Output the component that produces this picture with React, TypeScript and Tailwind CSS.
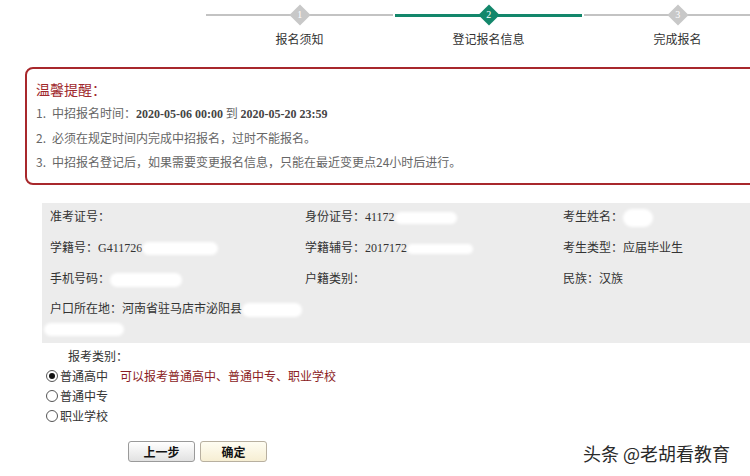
const cjk = "font-['Noto_Sans_CJK_SC',sans-serif]";
const serif = "font-['Liberation_Serif','Noto_Sans_CJK_SC',serif]";

const steps = [
  { n: 1, label: "报名须知", active: false },
  { n: 2, label: "登记报名信息", active: true },
  { n: 3, label: "完成报名", active: false },
];

const notes = [
  null,
  "必须在规定时间内完成中招报名，过时不能报名。",
  "中招报名登记后，如果需要变更报名信息，只能在最近变更点24小时后进行。",
];

function Blot({ className }: { className: string }) {
  return <span className={`inline-block rounded-full bg-white blur-[1.5px] align-middle ${className}`} />;
}

function Radio({ checked }: { checked?: boolean }) {
  return (
    <span className="mr-[2px] inline-flex h-[12px] w-[12px] items-center justify-center rounded-full border border-[#555] bg-white">
      {checked && <span className="h-[6px] w-[6px] rounded-full bg-[#111]" />}
    </span>
  );
}

export default function App() {
  return (
    <div className={`relative h-[476px] w-[750px] overflow-hidden bg-white text-[12px] text-[#333] ${cjk}`}>
      {/* steps */}
      <div className="flex pl-[205px] pt-[4px]">
        {steps.map((s) => (
          <div key={s.n} className="flex w-[189px] shrink-0 flex-col items-center">
            <div className="relative flex h-[22px] w-full items-center">
              <div className={`mx-[1px] w-full ${s.active ? "h-[3px] bg-[#13876b]" : "h-[2px] bg-[#c3c3c3]"}`} />
              <div
                className={`absolute left-1/2 top-1/2 flex h-[15px] w-[15px] -translate-x-1/2 -translate-y-1/2 rotate-45 items-center justify-center ${s.active ? "bg-[#13876b]" : "bg-[#c8c8c8]"}`}
              >
                <span className={`-rotate-45 text-[10px] leading-none text-white ${serif}`}>{s.n}</span>
              </div>
            </div>
            <div className="mt-[5px] leading-[16px] text-[#333]">{s.label}</div>
          </div>
        ))}
      </div>

      {/* notice */}
      <div className="ml-[25px] mt-[20px] w-[760px] rounded-[8px] border-2 border-[#a8282c] pb-[9px] pl-[9px] pt-[10px]">
        <div className="text-[14px] leading-[20px] text-[#a0282c]">温馨提醒：</div>
        <ol className="mt-[2px] text-[#666]">
          {notes.map((t, i) => (
            <li key={i} className="flex leading-[24px]">
              <span className="w-[16px] shrink-0">{i + 1}.</span>
              {t ?? (
                <span>
                  中招报名时间：<b className={`text-[#444] ${serif}`}>2020-05-06 00:00</b> 到{" "}
                  <b className={`text-[#444] ${serif}`}>2020-05-20 23:59</b>
                </span>
              )}
            </li>
          ))}
        </ol>
      </div>

      {/* info */}
      <div className="ml-[42px] mt-[18px] h-[140px] w-[720px] bg-[#ececec] pl-[8px]">
        <div className="grid grid-cols-[255px_258px_1fr] gap-y-[4px] leading-[26px]">
          <div>准考证号：</div>
          <div>
            身份证号：<span className={serif}>41172</span>
            <Blot className="h-[12px] w-[62px]" />
          </div>
          <div>
            考生姓名：<Blot className="h-[18px] w-[30px]" />
          </div>

          <div>
            学籍号：<span className={serif}>G411726</span>
            <Blot className="h-[13px] w-[76px]" />
          </div>
          <div>
            学籍辅号：<span className={serif}>2017172</span>
            <Blot className="h-[10px] w-[66px]" />
          </div>
          <div>考生类型：应届毕业生</div>

          <div>
            手机号码：<Blot className="h-[14px] w-[72px]" />
          </div>
          <div>户籍类别：</div>
          <div>民族：汉族</div>

          <div className="col-span-3">
            户口所在地：河南省驻马店市泌阳县
            <Blot className="h-[14px] w-[60px]" />
          </div>
        </div>
        <div className="-ml-[6px] mt-[2px] h-[13px] w-[80px] rounded-full bg-white blur-[1.5px]" />
      </div>

      {/* category */}
      <div className="ml-[46px] mt-[3px]">
        <div className="pl-[22px] leading-[20px]">报考类别：</div>
        <div className="flex items-center leading-[20px]">
          <Radio checked />
          <span>普通高中</span>
          <span className="ml-[12px] text-[#8b1c24]">可以报考普通高中、普通中专、职业学校</span>
        </div>
        <div className="flex items-center leading-[20px]">
          <Radio />
          <span>普通中专</span>
        </div>
        <div className="flex items-center leading-[20px]">
          <Radio />
          <span>职业学校</span>
        </div>
      </div>

      <div className="ml-[128px] mt-[15px] flex gap-[5px]">
        <button className="h-[21px] w-[67px] rounded-[3px] border border-[#9a9a9a] bg-gradient-to-b from-white to-[#e2e2e2] text-[12px] font-bold leading-none text-[#111]">
          上一步
        </button>
        <button className="h-[21px] w-[67px] rounded-[3px] border border-[#b8b0a0] bg-gradient-to-b from-[#fffdf2] to-[#f6eed3] text-[12px] font-bold leading-none text-[#111]">
          确定
        </button>
      </div>

      <div className="absolute left-[583px] top-[441px] text-[18px] leading-[24px] text-[#2a2a2a] [text-shadow:1px_1px_0_#fff,-1px_-1px_0_#fff]">
        头条 @老胡看教育
      </div>
    </div>
  );
}
